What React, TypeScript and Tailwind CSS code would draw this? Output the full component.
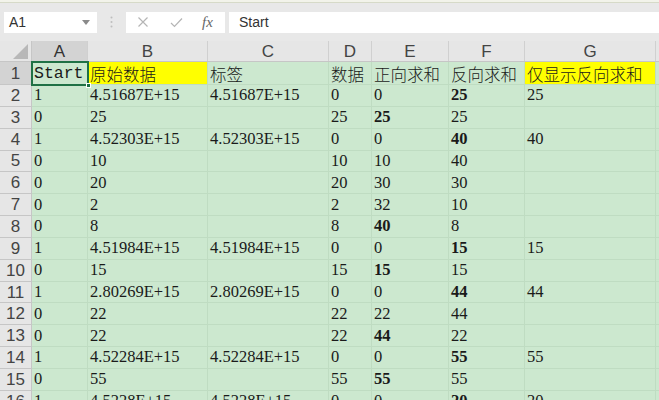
import React from "react";

type Cell = { v: string; b?: boolean; y?: boolean; cjk?: boolean; mono?: boolean };

// column widths, written out in full so Tailwind picks them up
const COLS = [
  { id: "A", w: "w-[56px]" },
  { id: "B", w: "w-[120px]" },
  { id: "C", w: "w-[121px]" },
  { id: "D", w: "w-[43px]" },
  { id: "E", w: "w-[77px]" },
  { id: "F", w: "w-[76px]" },
  { id: "G", w: "w-[131px]" },
];

const header: Cell[] = [
  { v: "Start", mono: true },
  { v: "原始数据", y: true, cjk: true },
  { v: "标签", cjk: true },
  { v: "数据", cjk: true },
  { v: "正向求和", cjk: true },
  { v: "反向求和", cjk: true },
  { v: "仅显示反向求和", y: true, cjk: true },
];

// [A, B, C, D, E, F, G]; "*" prefix marks bold
const raw: string[][] = [
  ["1", "4.51687E+15", "4.51687E+15", "0", "0", "*25", "25"],
  ["0", "25", "", "25", "*25", "25", ""],
  ["1", "4.52303E+15", "4.52303E+15", "0", "0", "*40", "40"],
  ["0", "10", "", "10", "10", "40", ""],
  ["0", "20", "", "20", "30", "30", ""],
  ["0", "2", "", "2", "32", "10", ""],
  ["0", "8", "", "8", "*40", "8", ""],
  ["1", "4.51984E+15", "4.51984E+15", "0", "0", "*15", "15"],
  ["0", "15", "", "15", "*15", "15", ""],
  ["1", "2.80269E+15", "2.80269E+15", "0", "0", "*44", "44"],
  ["0", "22", "", "22", "22", "44", ""],
  ["0", "22", "", "22", "*44", "22", ""],
  ["1", "4.52284E+15", "4.52284E+15", "0", "0", "*55", "55"],
  ["0", "55", "", "55", "*55", "55", ""],
  ["1", "4.5228E+15", "4.5228E+15", "0", "0", "*20", "20"],
];

const rows: Cell[][] = raw.map((r) =>
  r.map((s) => (s.startsWith("*") ? { v: s.slice(1), b: true } : { v: s }))
);

function FormulaBar() {
  return (
    <div className="flex h-[38px] items-center bg-[#e8e8e8] pl-[4px] font-['Liberation_Sans',sans-serif] text-[14px] text-[#333]">
      <div className="flex h-[21px] w-[93px] items-center justify-between bg-white pl-[5px] pr-[7px]">
        <span>A1</span>
        <svg width="8" height="5" viewBox="0 0 8 5">
          <path d="M0 0h8L4 5z" fill="#8a8a8a" />
        </svg>
      </div>
      <div className="flex w-[29px] justify-center">
        <svg width="3" height="12" viewBox="0 0 3 12">
          <circle cx="1.5" cy="1.5" r="1" fill="#bdbdbd" />
          <circle cx="1.5" cy="6" r="1" fill="#bdbdbd" />
          <circle cx="1.5" cy="10.5" r="1" fill="#bdbdbd" />
        </svg>
      </div>
      <div className="flex h-[21px] w-[99px] items-center bg-white">
        <svg className="ml-[11px]" width="12" height="12" viewBox="0 0 12 12">
          <path d="M1.5 1.5l9 9M10.5 1.5l-9 9" stroke="#b5b5b5" strokeWidth="1.2" />
        </svg>
        <svg className="ml-[21px]" width="13" height="11" viewBox="0 0 13 11">
          <path d="M1 6l3.5 3.5L12 1.5" stroke="#b5b5b5" strokeWidth="1.2" fill="none" />
        </svg>
        <span className="ml-[19px] font-['Liberation_Serif',serif] text-[15px] italic text-[#666]">fx</span>
      </div>
      <div className="ml-[4px] flex h-[21px] flex-1 items-center bg-white pl-[10px]">Start</div>
    </div>
  );
}

function ColumnHeader() {
  return (
    <div className="flex h-[21px] border-b border-[#c6c6c6] bg-[#e6e6e6] font-['Liberation_Sans',sans-serif] text-[17px] text-[#444]">
      <div className="relative w-[32px] shrink-0 border-r border-[#c6c6c6]">
        <svg className="absolute bottom-[2px] right-[3px]" width="15" height="15" viewBox="0 0 15 15">
          <path d="M15 0V15H0z" fill="#b8b8b8" />
        </svg>
      </div>
      {COLS.map((c, i) => (
        <div
          key={c.id}
          className={`${c.w} flex shrink-0 items-center justify-center border-r border-[#d0d0d0] leading-none ${
            i === 0 ? "bg-[#d3d3d3] text-[#333]" : ""
          }`}
        >
          {c.id}
        </div>
      ))}
      <div className="flex-1" />
    </div>
  );
}

function Row({ n, cells, first }: { n: number; cells: Cell[]; first?: boolean }) {
  return (
    <div className={`flex shrink-0 ${first ? "h-[23px]" : "h-[21.85px]"}`}>
      <div
        className={`flex w-[32px] shrink-0 items-center justify-center border-r border-b border-[#c6c6c6] font-['Liberation_Sans',sans-serif] text-[17px] leading-none text-[#444] ${
          first ? "bg-[#d3d3d3]" : "bg-[#e6e6e6]"
        }`}
      >
        {n}
      </div>
      {COLS.map((c, i) => {
        const cell = cells[i];
        return (
          <div
            key={c.id}
            className={`${c.w} flex shrink-0 items-end overflow-visible whitespace-nowrap border-r border-b border-[#bfdcc2] pl-[2px] pb-[2px] leading-none text-[#1a1a1a] ${
              cell.y ? "bg-[#ffff00]" : "bg-[#cce8cf]"
            } ${
              cell.cjk
                ? "font-['Noto_Sans_CJK_SC',sans-serif] text-[16.5px] font-light"
                : cell.mono
                ? "font-['Liberation_Mono',monospace] text-[16.5px]"
                : "font-['Liberation_Serif',serif] text-[16.5px]"
            } ${cell.b ? "font-bold" : ""}`}
          >
            {cell.v}
          </div>
        );
      })}
      <div className="flex-1 border-b border-[#bfdcc2] bg-[#cce8cf]" />
    </div>
  );
}

export default function App() {
  return (
    <div className="h-[400px] w-[659px] overflow-hidden bg-[#e8e8e8]">
      <div className="h-[3px] border-b border-[#d6dac8] bg-[#f2f3ea]" />
      <FormulaBar />
      <ColumnHeader />
      <div className="relative flex flex-col">
        <Row n={1} cells={header} first />
        {rows.map((r, i) => (
          <Row key={i} n={i + 2} cells={r} />
        ))}
        {/* active cell A1 */}
        <div className="pointer-events-none absolute left-[31px] top-[-1px] h-[25px] w-[58px] border-2 border-[#1f7145]">
          <div className="absolute bottom-[-4px] right-[-4px] h-[5px] w-[5px] border border-white bg-[#1f7145]" />
        </div>
      </div>
    </div>
  );
}
